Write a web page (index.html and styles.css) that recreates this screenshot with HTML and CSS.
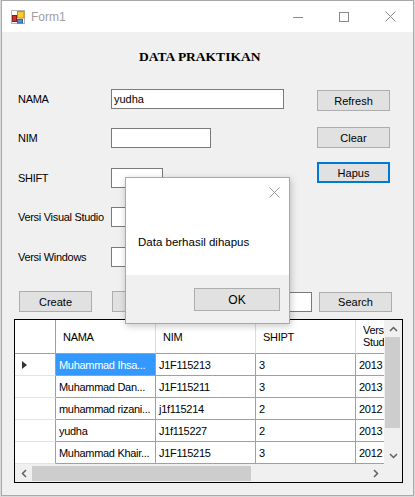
FILE: index.html
```html
<!DOCTYPE html>
<html>
<head>
<meta charset="utf-8">
<title>Form1</title>
<link rel="stylesheet" href="styles.css">
</head>
<body>
<div class="window">
  <div class="titlebar">
    <svg class="appicon" viewBox="0 0 14 14" width="14" height="14">
      <rect x="0.5" y="0.5" width="13" height="13" fill="#fff" stroke="#b5b5b5"/>
      <rect x="1.5" y="5.5" width="4" height="6" fill="#d0312d" stroke="#8e1a16"/>
      <rect x="6.5" y="1.5" width="6.5" height="6.5" fill="#f8cf2c" stroke="#c98a10"/>
      <rect x="6.5" y="9.5" width="5" height="3.5" fill="#5b8ee0" stroke="#2e5fb0"/>
    </svg>
    <span class="title">Form1</span>
    <div class="caption">
      <div class="cap"><svg width="10" height="10" viewBox="0 0 10 10"><line x1="0" y1="5.5" x2="10" y2="5.5" stroke="#8a8a8a" stroke-width="1"/></svg></div>
      <div class="cap"><svg width="10" height="10" viewBox="0 0 10 10"><rect x="0.5" y="0.5" width="9" height="9" fill="none" stroke="#8a8a8a" stroke-width="1"/></svg></div>
      <div class="cap"><svg width="11" height="11" viewBox="0 0 11 11"><path d="M0.5 0.5 L10.5 10.5 M10.5 0.5 L0.5 10.5" stroke="#8a8a8a" stroke-width="1" fill="none"/></svg></div>
    </div>
  </div>

  <div class="client">
    <h1 class="heading">DATA PRAKTIKAN</h1>

    <div class="form">
      <div class="fields">
        <div class="field"><span class="label">NAMA</span><div class="textbox w173">yudha</div></div>
        <div class="field g19"><span class="label">NIM</span><div class="textbox w100"></div></div>
        <div class="field g20"><span class="label">SHIFT</span><div class="textbox w52"></div></div>
        <div class="field g19"><span class="label">Versi Visual Studio</span><div class="textbox w52"></div></div>
        <div class="field g20"><span class="label">Versi Windows</span><div class="textbox w52"></div></div>
      </div>
      <div class="actions">
        <div class="btn">Refresh</div>
        <div class="btn mt16">Clear</div>
        <div class="btn focus mt14">Hapus</div>
      </div>
    </div>

    <div class="bottom-row">
      <div class="btn">Create</div>
      <div class="btn ml20">Update</div>
      <div class="textbox search-box"></div>
      <div class="btn search-btn">Search</div>
    </div>

    <div class="grid">
      <div class="grid-main">
        <div class="table">
          <div class="corner-cell"></div>
          <div class="hc">NAMA</div>
          <div class="hc">NIM</div>
          <div class="hc">SHIPT</div>
          <div class="hc last"><span class="wrap">Versi Studio</span></div>

          <div class="rh"><span class="arrow-ind"></span></div>
          <div class="c sel">Muhammad Ihsa...</div>
          <div class="c">J1F115213</div>
          <div class="c">3</div>
          <div class="c last">2013</div>

          <div class="rh"></div>
          <div class="c">Muhammad Dan...</div>
          <div class="c">J1F115211</div>
          <div class="c">3</div>
          <div class="c last">2013</div>

          <div class="rh"></div>
          <div class="c">muhammad rizani...</div>
          <div class="c">j1f115214</div>
          <div class="c">2</div>
          <div class="c last">2012</div>

          <div class="rh"></div>
          <div class="c">yudha</div>
          <div class="c">J1f115227</div>
          <div class="c">2</div>
          <div class="c last">2013</div>

          <div class="rh"></div>
          <div class="c">Muhammad Khair...</div>
          <div class="c">J1F115215</div>
          <div class="c">3</div>
          <div class="c last">2012</div>
        </div>
        <div class="vscroll">
          <div class="sarrow"><svg width="9" height="6" viewBox="0 0 9 6"><polyline points="1,5 4.5,1.5 8,5" fill="none" stroke="#606060" stroke-width="1.5"/></svg></div>
          <div class="vtrack"><div class="vthumb"></div></div>
          <div class="sarrow"><svg width="9" height="6" viewBox="0 0 9 6"><polyline points="1,1 4.5,4.5 8,1" fill="none" stroke="#606060" stroke-width="1.5"/></svg></div>
        </div>
      </div>
      <div class="grid-foot">
        <div class="hscroll">
          <div class="harrow"><svg width="6" height="9" viewBox="0 0 6 9"><polyline points="5,1 1.5,4.5 5,8" fill="none" stroke="#606060" stroke-width="1.5"/></svg></div>
          <div class="htrack"><div class="hthumb"></div></div>
          <div class="harrow"><svg width="6" height="9" viewBox="0 0 6 9"><polyline points="1,1 4.5,4.5 1,8" fill="none" stroke="#606060" stroke-width="1.5"/></svg></div>
        </div>
        <div class="corner"></div>
      </div>
    </div>
  </div>
</div>

<div class="dialog">
  <div class="dlg-body">
    <svg class="dlg-close" width="11" height="11" viewBox="0 0 11 11"><path d="M0.5 0.5 L10.5 10.5 M10.5 0.5 L0.5 10.5" stroke="#9a9a9a" stroke-width="1" fill="none"/></svg>
    <div class="dlg-text">Data berhasil dihapus</div>
  </div>
  <div class="dlg-footer">
    <div class="btn ok">OK</div>
  </div>
</div>
</body>
</html>
```

FILE: styles.css
```css
html, body {
  margin: 0;
  padding: 0;
}
body {
  width: 415px;
  height: 497px;
  overflow: hidden;
  background: #d9d9d9;
  font-family: "Liberation Sans", Arial, sans-serif;
  color: #000;
  position: relative;
}

.window {
  box-sizing: border-box;
  margin-left: 1px;
  width: 413px;
  height: 496px;
  border: 1px solid #aaaaaa;
  background: #f0f0f0;
  display: flex;
  flex-direction: column;
}

.titlebar {
  height: 31px;
  flex-shrink: 0;
  background: #ffffff;
  display: flex;
  align-items: center;
}
.appicon {
  margin-left: 9px;
  display: block;
}
.title {
  margin-left: 6px;
  font-size: 12px;
  color: #a0a0a0;
  line-height: 14px;
  padding-top: 1px;
}
.caption {
  margin-left: auto;
  display: flex;
}
.cap {
  width: 46px;
  height: 31px;
  display: flex;
  align-items: center;
  justify-content: center;
}
.cap svg { display: block; }

.client {
  flex: 1;
  display: flex;
  flex-direction: column;
}

.heading {
  margin: 17px 0 0 137px;
  height: 16px;
  font-family: "Liberation Serif", "Times New Roman", serif;
  font-weight: bold;
  font-size: 13.5px;
  line-height: 16px;
}

.form {
  display: flex;
  margin-top: 24px;
}
.fields {
  box-sizing: border-box;
  width: 315px;
  padding-left: 16px;
  display: flex;
  flex-direction: column;
}
.field {
  display: flex;
  align-items: center;
  height: 20px;
}
.g19 { margin-top: 19px; }
.g20 { margin-top: 20px; }
.label {
  width: 93px;
  flex-shrink: 0;
  font-size: 11px;
  letter-spacing: -0.3px;
  white-space: nowrap;
}

.textbox {
  box-sizing: border-box;
  height: 20px;
  border: 1px solid #7a7a7a;
  background: #ffffff;
  font-size: 11px;
  line-height: 18px;
  padding-left: 2px;
}
.w173 { width: 173px; }
.w100 { width: 100px; }
.w52 { width: 52px; }

.actions {
  display: flex;
  flex-direction: column;
  padding-top: 1px;
}
.btn {
  box-sizing: border-box;
  width: 73px;
  height: 21px;
  border: 1px solid #adadad;
  background: #e1e1e1;
  font-size: 11px;
  display: flex;
  align-items: center;
  justify-content: center;
  flex-shrink: 0;
}
.mt16 { margin-top: 16px; }
.mt14 { margin-top: 14px; }
.focus { border: 2px solid #0078d7; }

.bottom-row {
  display: flex;
  align-items: flex-start;
  margin-top: 24px;
  padding-left: 17px;
  height: 21px;
}
.ml20 { margin-left: 20px; }
.search-box {
  width: 112px;
  margin-left: 15px;
  margin-top: 1px;
}
.search-btn {
  margin-left: 7px;
  margin-top: 1px;
  height: 20px;
}

.grid {
  box-sizing: border-box;
  margin: 7px 0 0 12px;
  width: 389px;
  height: 164px;
  border: 1px solid #000;
  background: #ffffff;
  display: flex;
  flex-direction: column;
}
.grid-main {
  display: flex;
  height: 144px;
}
.table {
  width: 369px;
  height: 144px;
  overflow: hidden;
  display: grid;
  grid-template-columns: 41px 100px 100px 100px 28px;
  grid-template-rows: 34px repeat(5, 22px);
  font-size: 11px;
  letter-spacing: -0.3px;
}
.table > div {
  box-sizing: border-box;
  overflow: hidden;
  white-space: nowrap;
  display: flex;
  align-items: center;
}
.corner-cell {
  border-right: 1px solid #a0a0a0;
  border-bottom: 1px solid #a0a0a0;
}
.hc {
  border-right: 1px solid #dcdcdc;
  border-bottom: 1px solid #a0a0a0;
  padding-left: 7px;
}
.hc.last {
  border-right: none;
  white-space: normal;
  align-items: center;
}
.wrap {
  display: block;
  width: 21px;
  line-height: 11.5px;
  white-space: normal;
  word-break: keep-all;
}
.rh {
  border-right: 1px solid #a0a0a0;
  border-bottom: 1px solid #e3e3e3;
  padding-left: 7px;
}
.arrow-ind {
  width: 0;
  height: 0;
  border-left: 5px solid #333;
  border-top: 4.5px solid transparent;
  border-bottom: 4.5px solid transparent;
}
.c {
  border-right: 1px solid #a0a0a0;
  border-bottom: 1px solid #a0a0a0;
  padding-left: 3px;
}
.c.last { border-right: none; }
.sel {
  background: #3399ff;
  color: #ffffff;
}

.vscroll {
  width: 18px;
  height: 144px;
  background: #f0f0f0;
  display: flex;
  flex-direction: column;
}
.sarrow {
  height: 17px;
  display: flex;
  align-items: center;
  justify-content: center;
  flex-shrink: 0;
}
.sarrow svg, .harrow svg { display: block; }
.vtrack {
  flex: 1;
}
.vthumb {
  width: 15px;
  height: 91px;
  margin-left: 1px;
  background: #cdcdcd;
}

.grid-foot {
  display: flex;
  height: 18px;
}
.hscroll {
  width: 369px;
  height: 18px;
  background: #f0f0f0;
  display: flex;
}
.harrow {
  width: 17px;
  display: flex;
  align-items: center;
  justify-content: center;
  flex-shrink: 0;
}
.htrack {
  flex: 1;
  display: flex;
  align-items: center;
}
.hthumb {
  width: 219px;
  height: 15px;
  background: #cdcdcd;
}
.corner {
  width: 18px;
  background: #f0f0f0;
}

.dialog {
  position: absolute;
  left: 125px;
  top: 177px;
  box-sizing: border-box;
  width: 165px;
  height: 147px;
  border: 1px solid #a8a8a8;
  background: #ffffff;
  box-shadow: 1px 2px 7px rgba(0, 0, 0, 0.22);
  display: flex;
  flex-direction: column;
}
.dlg-body {
  position: relative;
  height: 97px;
  background: #ffffff;
}
.dlg-close {
  position: absolute;
  left: 143px;
  top: 9px;
  display: block;
}
.dlg-text {
  padding: 56px 0 0 12px;
  font-size: 11.5px;
  line-height: 16px;
  white-space: nowrap;
}
.dlg-footer {
  height: 48px;
  background: #f0f0f0;
  display: flex;
  justify-content: flex-end;
  align-items: flex-start;
  box-sizing: border-box;
  padding: 13px 9px 0 0;
}
.ok {
  width: 86px;
  height: 23px;
  font-size: 12px;
}
```
